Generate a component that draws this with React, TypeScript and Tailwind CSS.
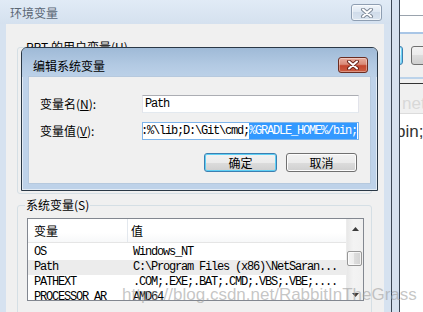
import React from "react";

function CloseX({ outline }: { outline: string }) {
  return (
    <svg width="14" height="10" viewBox="0 0 14 10">
      <path d="M3 1.5 L11 8.5 M11 1.5 L3 8.5" stroke={outline} strokeWidth="4" strokeLinecap="round" fill="none" />
      <path d="M3 1.5 L11 8.5 M11 1.5 L3 8.5" stroke="#ffffff" strokeWidth="2" strokeLinecap="round" fill="none" />
    </svg>
  );
}

function Tri({ down }: { down?: boolean }) {
  return (
    <svg width="7" height="4" viewBox="0 0 7 4">
      <polygon points={down ? "0,0 7,0 3.5,4" : "0,4 7,4 3.5,0"} fill="#3a3a3a" />
    </svg>
  );
}

const rows = [
  { k: "OS", v: "Windows_NT", hl: false },
  { k: "Path", v: "C:\\Program Files (x86)\\NetSaran...", hl: true },
  { k: "PATHEXT", v: ".COM;.EXE;.BAT;.CMD;.VBS;.VBE;....", hl: false },
  { k: "PROCESSOR_AR", v: "AMD64", hl: false },
];

function BehindWindow() {
  return (
    <div className="absolute left-[392px] top-0 w-[40px] h-[312px] bg-[#d5e1ef] pl-[7px]">
      <div className="h-full border-l border-[#3a4654] bg-white flex flex-col overflow-hidden">
        <div className="h-[15px] bg-white" />
        <div className="h-[1px] bg-[#9aa3ad]" />
        <div className="h-[16px] bg-white" />
        <div className="h-[2px] bg-[#a9c6e6]" />
        <div className="h-[12px] bg-[#f0f0f0]" />
        <div className="h-[19px] bg-[#f0f0f0] flex">
          <div className="ml-[-20px] w-[33px] h-full rounded-[3px] border border-[#3c7fb1] shadow-[inset_0_0_0_1px_#6fd4f4] bg-[linear-gradient(#eaf6fd,#d9f0fc_50%,#bee6fd_50%,#a7d9f5)]" />
          <div className="ml-[8px] w-[30px] h-full rounded-[3px] border border-[#707070] bg-[linear-gradient(#f2f2f2,#ebebeb_50%,#dddddd_50%,#cfcfcf)]" />
        </div>
        <div className="h-[12px] bg-[#f0f0f0]" />
        <div className="h-[2px] bg-[#bcd3ea]" />
        <div className="h-[4px] bg-[#f0f0f0]" />
        <div className="h-[1px] bg-[#333333]" />
        <div className="h-[29px] bg-[#f0f0f0] pt-[11px] pl-[2px]">
          <div className="font-['Liberation_Sans',Arial,sans-serif] text-[17px] leading-[17px] text-[#d8d8d8] whitespace-nowrap">net</div>
        </div>
        <div className="h-[1px] bg-[#dcdcdc]" />
        <div className="flex-1 bg-white pt-[9px] ml-[-4px]">
          <div className="font-['Liberation_Sans',Arial,sans-serif] text-[17px] leading-[17px] text-[#333333] whitespace-nowrap">bin;</div>
        </div>
      </div>
    </div>
  );
}

function OuterWindow() {
  return (
    <div className="absolute left-0 top-0 w-[392px] h-[330px] bg-[#d6e2f0] border-r border-[#3a4654] flex flex-col">
      <div className="h-[24px] shrink-0 flex items-start bg-[linear-gradient(#e1ebf6,#d5e1ef)]">
        <div className="ml-[10px] mt-[7px] text-[#5a6674] text-[12px] leading-[12px]">环境变量</div>
        <div className="ml-auto mr-[9px] mt-[4px] w-[31px] h-[17px] rounded-[3px] border border-[#8e9eb2] bg-[linear-gradient(#f0f5fa,#dde7f2_50%,#d0dcea_50%,#dbe5f0)] shadow-[inset_0_0_0_1px_rgba(255,255,255,0.6)] flex items-center justify-center">
          <CloseX outline="#7d8897" />
        </div>
      </div>
      <div className="ml-[6px] w-[378px] flex-1 bg-[#f0f0f0] pt-[17px] flex flex-col">
        {/* user variables group */}
        <div className="relative ml-[11px] w-[355px] h-[153px] pt-[6px]">
          <div className="h-full rounded-[3px] border border-[#d5dfe5]" />
          <div className="absolute left-[8px] top-0 px-[1px] bg-[#f0f0f0] leading-[12px] whitespace-nowrap">
            RRT 的用户变量(U)
          </div>
        </div>
        {/* system variables group */}
        <div className="relative ml-[11px] w-[355px] mt-[5px] h-[130px] pt-[6px]">
          <div className="h-full rounded-[3px] border border-[#d5dfe5] pl-[9px] pt-[12px]">
            <div className="w-[337px] h-[83px] border border-[#828790] bg-white flex overflow-hidden">
              <div className="w-[318px] flex flex-col">
                <div className="h-[24px] shrink-0 flex border-b border-[#e5e5e5] bg-[linear-gradient(#ffffff,#ffffff_60%,#f7f8f9)]">
                  <div className="w-[100px] border-r border-[#e3e8ee] flex items-center pl-[6px]">变量</div>
                  <div className="flex-1 flex items-center pl-[3px]">值</div>
                </div>
                <div className="pt-[2px] font-['Liberation_Mono',monospace] text-[12px] tracking-[-1.2px]">
                  {rows.map((r) => (
                    <div key={r.k} className={`h-[15px] flex items-center whitespace-nowrap ${r.hl ? "bg-[#ececec]" : ""}`}>
                      <div className="w-[100px] pl-[6px] leading-[15px]">{r.k}</div>
                      <div className="flex-1 pl-[5px] leading-[15px]">{r.v}</div>
                    </div>
                  ))}
                </div>
              </div>
              <div className="w-[17px] flex flex-col border-l border-[#ececec] bg-[linear-gradient(90deg,#e8e8e8,#f3f3f3_40%,#f0f0f0)]">
                <div className="h-[17px] flex items-center justify-center pt-[2px]">
                  <Tri />
                </div>
                <div className="mt-[15px] w-[15px] h-[15px] rounded-[2px] border border-[#979797] bg-[linear-gradient(90deg,#f4f4f4,#ececec_50%,#dcdcdc_50%,#d2d2d2)] shadow-[inset_0_0_0_1px_rgba(255,255,255,0.7)]" />
                <div className="mt-auto h-[17px] flex items-center justify-center pt-[6px]">
                  <Tri down />
                </div>
              </div>
            </div>
          </div>
          <div className="absolute left-[8px] top-0 px-[1px] bg-[#f0f0f0] leading-[12px] whitespace-nowrap">
            系统变量(S)
          </div>
        </div>
      </div>
    </div>
  );
}

function Dialog() {
  return (
    <div className="absolute left-[21px] top-[47px] w-[357px] h-[144px] rounded-t-[6px] border border-[#2a3846] bg-[#bed2e9] shadow-[inset_0_0_0_1px_rgba(255,255,255,0.55)] flex flex-col">
      <div className="h-[29px] shrink-0 flex items-start rounded-t-[5px] bg-[linear-gradient(#9fbad7,#b3cae3_60%,#bcd1e8)]">
        <div className="ml-[11px] mt-[12px] leading-[12px] text-black">编辑系统变量</div>
        <div className="ml-auto mr-[9px] mt-[9px] w-[30px] h-[16px] rounded-[3px] border border-[#6b2d22] bg-[linear-gradient(#e9ad9e,#d98a77_45%,#c4462e_55%,#cb5d42)] shadow-[inset_0_0_0_1px_rgba(255,255,255,0.35)] flex items-center justify-center">
          <CloseX outline="#6b2519" />
        </div>
      </div>
      <div className="mx-[7px] h-[106px] bg-[#f0f0f0] shadow-[0_0_0_1px_#b6c9de] pt-[18px] flex flex-col">
        <div className="h-[18px] flex items-center">
          <div className="w-[113px] pl-[11px] leading-[12px] whitespace-nowrap">
            变量名(<span className="underline">N</span>):
          </div>
          <div className="w-[217px] h-[18px] border border-[#abadb3] border-x-[#e2e3ea] border-b-[#e3e9ef] bg-white flex items-center pl-[2px] font-['Liberation_Mono',monospace] text-[12px] tracking-[-1.2px] leading-[16px]">
            Path
          </div>
        </div>
        <div className="mt-[9px] h-[18px] flex items-center">
          <div className="w-[113px] pl-[11px] leading-[12px] whitespace-nowrap">
            变量值(<span className="underline">V</span>):
          </div>
          <div className="w-[217px] h-[18px] border border-[#7eb4ea] bg-white flex items-stretch overflow-hidden font-['Liberation_Mono',monospace] text-[12px] tracking-[-1.2px] leading-[16px] whitespace-nowrap">
            <div className="ml-[-2px] flex items-center">:%\lib;D:\Git\cmd;</div>
            <div className="flex items-center bg-[#3399ff] text-white">%GRADLE_HOME%/bin;</div>
          </div>
        </div>
        <div className="mt-[13px] flex pl-[175px] gap-[9px]">
          <div className="w-[73px] h-[19px] rounded-[3px] border border-[#3c7fb1] shadow-[inset_0_0_0_1px_#5fd0f5] bg-[linear-gradient(#f2f2f2,#ebebeb_50%,#dddddd_50%,#cfcfcf)] flex items-center justify-center leading-[12px]">
            确定
          </div>
          <div className="w-[71px] h-[19px] rounded-[3px] border border-[#707070] shadow-[inset_0_0_0_1px_#fcfcfc] bg-[linear-gradient(#f2f2f2,#ebebeb_50%,#dddddd_50%,#cfcfcf)] flex items-center justify-center leading-[12px]">
            取消
          </div>
        </div>
      </div>
    </div>
  );
}

export default function App() {
  return (
    <div className="relative w-[423px] h-[312px] overflow-hidden bg-white font-['Noto_Sans_CJK_SC',sans-serif] text-[12px] leading-[12px] text-black">
      <BehindWindow />
      <OuterWindow />
      <Dialog />
      <div className="absolute left-[122px] top-[286px] font-['Liberation_Sans',Arial,sans-serif] text-[17px] leading-[17px] text-[#a0a0a0]/60 whitespace-nowrap pointer-events-none">
        https://blog.csdn.net/RabbitInTheGrass
      </div>
    </div>
  );
}
